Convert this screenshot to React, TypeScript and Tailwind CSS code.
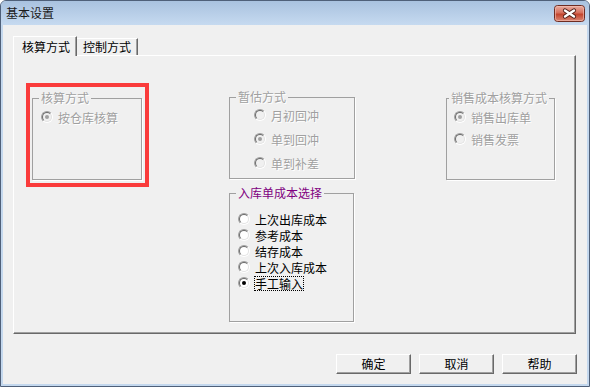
import type { ReactNode } from 'react';

const dim = 'text-[#a0a0a0] [text-shadow:1px_1px_0_#fff]';

const Radio = ({ checked, disabled }: { checked?: boolean; disabled?: boolean }) => (
  <span className="flex h-[12px] w-[12px] shrink-0 rounded-full border border-t-[#a0a0a0] border-l-[#a0a0a0] border-r-white border-b-white">
    <span
      className={`flex flex-1 items-center justify-center rounded-full border border-t-[#696969] border-l-[#696969] border-r-[#e3e3e3] border-b-[#e3e3e3] ${
        disabled ? 'bg-[#f0f0f0]' : 'bg-white'
      }`}
    >
      {checked && <span className={`h-[4px] w-[4px] rounded-full ${disabled ? 'bg-[#a0a0a0]' : 'bg-black'}`} />}
    </span>
  </span>
);

type Option = { label: string; checked?: boolean; focused?: boolean };

const RadioRow = ({ opt, disabled, h }: { opt: Option; disabled?: boolean; h: string }) => (
  <div className={`flex items-center gap-[4px] ${h}`}>
    <Radio checked={opt.checked} disabled={disabled} />
    <span
      className={`border text-[12px] leading-[13px] ${opt.focused ? 'border-dotted border-black' : 'border-transparent'} ${
        disabled ? dim : 'text-black'
      }`}
    >
      {opt.label}
    </span>
  </div>
);

const Group = ({
  title,
  titleClass,
  legendMl = 'ml-[6px]',
  className,
  children,
}: {
  title: string;
  titleClass: string;
  legendMl?: string;
  className: string;
  children: ReactNode;
}) => (
  <fieldset className={`border border-[#a0a0a0] shadow-[1px_1px_0_#fff] ${className}`}>
    <legend className={`${legendMl} px-[2px] text-[12px] leading-[12px] ${titleClass}`}>{title}</legend>
    {children}
  </fieldset>
);

const groupB: Option[] = [{ label: '月初回冲' }, { label: '单到回冲', checked: true }, { label: '单到补差' }];
const groupC: Option[] = [
  { label: '上次出库成本' },
  { label: '参考成本' },
  { label: '结存成本' },
  { label: '上次入库成本' },
  { label: '手工输入', checked: true, focused: true },
];
const groupD: Option[] = [{ label: '销售出库单', checked: true }, { label: '销售发票' }];

const CloseButton = () => (
  <svg width="31" height="17" viewBox="0 0 31 17">
    <defs>
      <linearGradient id="closeGrad" x1="0" y1="0" x2="0" y2="1">
        <stop offset="0" stopColor="#eab0a4" />
        <stop offset="0.45" stopColor="#d6705d" />
        <stop offset="0.55" stopColor="#c3452e" />
        <stop offset="1" stopColor="#dc8a78" />
      </linearGradient>
    </defs>
    <rect x="0.5" y="0.5" width="30" height="16" rx="3" fill="url(#closeGrad)" stroke="#6e2c22" />
    <rect x="1.5" y="1.5" width="28" height="14" rx="2" fill="none" stroke="#f3c3b8" strokeOpacity="0.6" />
    <path d="M11 5.5 L20 11.5 M20 5.5 L11 11.5" stroke="#4d1d16" strokeWidth="4.2" strokeLinecap="round" />
    <path d="M11 5.5 L20 11.5 M20 5.5 L11 11.5" stroke="#fff" strokeWidth="2.4" strokeLinecap="round" />
  </svg>
);

const btn =
  'flex h-[20px] w-[75px] items-center justify-center border border-t-white border-l-white border-r-[#696969] border-b-[#696969] bg-[#f0f0f0] text-[12px] leading-none text-black shadow-[inset_-1px_-1px_0_#a0a0a0]';

export default function App() {
  return (
    <div className="flex h-[387px] w-[590px] flex-col overflow-hidden rounded-t-[6px] border border-[#4f6079] bg-[#c4d8ee] font-['Noto_Sans_CJK_SC',sans-serif]">
      <div className="flex h-[24px] shrink-0 items-center justify-between bg-linear-to-b from-[#a9c2df] to-[#c6daf0] pl-[5px] pr-[4px]">
        <span className="text-[12px] leading-none text-[#1a1a1a]">基本设置</span>
        <CloseButton />
      </div>

      <div className="mx-[2px] mb-[2px] flex flex-1 flex-col bg-[#f0f0f0]">
        {/* tabs */}
        <div className="relative z-10 -mb-px flex items-end pl-[10px] pt-[11px]">
          <div className="flex h-[20px] w-[64px] items-center border-l border-t border-r border-l-white border-t-white border-r-[#696969] bg-[#f0f0f0] pl-[8px] text-[12px] leading-none text-black shadow-[inset_-1px_0_0_#a0a0a0]">
            核算方式
          </div>
          <div className="mb-[1px] flex h-[17px] w-[61px] items-center border-t border-r border-t-white border-r-[#696969] pl-[6px] text-[12px] leading-none text-black shadow-[inset_-1px_0_0_#a0a0a0]">
            控制方式
          </div>
        </div>

        {/* tab page */}
        <div className="ml-[10px] flex h-[279px] w-[563px] items-start border border-t-white border-l-white border-r-[#696969] border-b-[#696969] shadow-[inset_-1px_-1px_0_#a0a0a0]">
          <div className="ml-[12px] mt-[27px] h-[104px] w-[123px] shrink-0 border-4 border-[#fa3b3b]">
            <Group title="核算方式" titleClass={dim} className="ml-[2px] mt-[5px] h-[88px] w-[110px]">
              <div className="mt-[5px] pl-[8px]">
                <RadioRow opt={{ label: '按仓库核算', checked: true }} disabled h="h-[16px]" />
              </div>
            </Group>
          </div>

          <div className="ml-[80px] mt-[35px] flex shrink-0 flex-col gap-[8px]">
            <Group title="暂估方式" titleClass={dim} className="h-[88px] w-[126px]">
              <div className="pl-[24px]">
                {groupB.map((o) => (
                  <RadioRow key={o.label} opt={o} disabled h="h-[24px]" />
                ))}
              </div>
            </Group>
            <Group title="入库单成本选择" titleClass="text-[#800080]" className="h-[135px] w-[125px]">
              <div className="mt-[12px] pl-[8px]">
                {groupC.map((o) => (
                  <RadioRow key={o.label} opt={o} h="h-[16px]" />
                ))}
              </div>
            </Group>
          </div>

          <Group title="销售成本核算方式" titleClass={dim} legendMl="ml-[2px]" className="ml-[91px] mt-[36px] h-[88px] w-[109px] shrink-0">
            <div className="mt-[2px] pl-[7px]">
              {groupD.map((o) => (
                <RadioRow key={o.label} opt={o} disabled h="h-[22px]" />
              ))}
            </div>
          </Group>
        </div>

        {/* buttons */}
        <div className="mt-[20px] flex justify-end gap-[8px] pr-[10px]">
          <button className={btn}>确定</button>
          <button className={btn}>取消</button>
          <button className={btn}>帮助</button>
        </div>
      </div>
    </div>
  );
}
